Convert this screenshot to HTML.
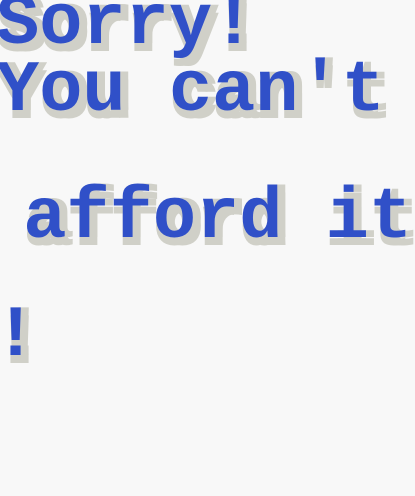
<!DOCTYPE html>
<html><head><meta charset="utf-8"><style>
html,body{margin:0;padding:0;}
body{width:415px;height:496px;background:#f8f8f8;position:relative;overflow:hidden;}
.l{position:absolute;left:0;white-space:pre;font-family:"Liberation Mono",monospace;font-weight:bold;font-size:72px;line-height:72px;color:#3050c8;letter-spacing:0px;
text-shadow:8px 0 0 #d0d0c8,0 8px 0 #d0d0c8,8px 8px 0 #d0d0c8;}
</style></head><body>
<div class="l" style="top:-12px;left:-4px">Sorry!</div>
<div class="l" style="top:55px;left:-4px">You can't</div>
<div class="l" style="top:182px;left:-20px"> afford it</div>
<div class="l" style="top:300px;left:-6px">!</div>
</body></html>
